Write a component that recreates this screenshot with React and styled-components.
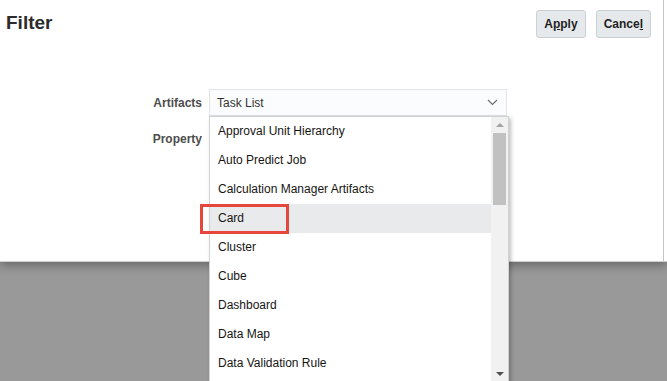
import React from 'react';
import styled, { createGlobalStyle } from 'styled-components';

const Global = createGlobalStyle`
  html, body {
    margin: 0;
    padding: 0;
    height: 381px;
    overflow: hidden;
    background: #999999;
    font-family: "Liberation Sans", Arial, sans-serif;
  }
`;

const Dialog = styled.div`
  background: #ffffff;
  height: 262px;
  box-shadow: 0 3px 10px rgba(0, 0, 0, 0.35);
  border-bottom: 1px solid #cfcfcf;
  box-sizing: border-box;
`;

const Panel = styled.div`
  width: 664px;
  height: 100%;
  border-right: 1px solid #c6c6c6;
  box-sizing: border-box;
`;

const Header = styled.div`
  display: flex;
  justify-content: space-between;
  align-items: flex-start;
  padding: 10px 12px 0 6px;
`;

const Title = styled.h1`
  margin: 2px 0 0;
  font-size: 19px;
  line-height: 22px;
  font-weight: bold;
  color: #2b2b2b;
`;

const Actions = styled.div`
  display: flex;
  gap: 10px;
`;

const Button = styled.button`
  height: 28px;
  padding: 0 7px;
  border: 1px solid #c9d1d6;
  border-radius: 3px;
  background: #e5e9ec;
  font-family: inherit;
  font-size: 12px;
  font-weight: bold;
  color: #1f1f1f;
  u {
    text-underline-offset: 1px;
  }
`;

const Form = styled.div`
  display: grid;
  grid-template-columns: 202px 298px;
  grid-auto-rows: 27px;
  column-gap: 7px;
  row-gap: 9px;
  margin-top: 51px;
`;

const Label = styled.label`
  align-self: center;
  text-align: right;
  font-size: 12px;
  font-weight: bold;
  color: #4d4d4d;
`;

const Field = styled.div`
  position: relative;
`;

const Select = styled.div`
  display: flex;
  align-items: center;
  justify-content: space-between;
  height: 27px;
  box-sizing: border-box;
  padding: 0 8px 0 7px;
  border: 1px solid #dfe4e8;
  background: #fbfcfd;
  font-size: 12px;
  color: #333333;
`;

const List = styled.div`
  position: absolute;
  top: 27px;
  left: 0;
  width: 300px;
  height: 266px;
  display: flex;
  background: #ffffff;
  border: 1px solid #d2d2d2;
  box-sizing: border-box;
  box-shadow: 2px 2px 4px rgba(0, 0, 0, 0.25);
  z-index: 2;
`;

const Items = styled.ul`
  flex: 1;
  list-style: none;
  margin: 0;
  padding: 0;
`;

const Item = styled.li`
  position: relative;
  height: 29px;
  line-height: 29px;
  padding-left: 8px;
  font-size: 12px;
  color: #161513;
  background: ${(p) => (p.$active ? '#e9eaeb' : 'transparent')};
`;

const Marker = styled.span`
  position: absolute;
  left: -10px;
  top: 0;
  width: 89px;
  height: 30px;
  border: 3px solid #e5473d;
  box-sizing: border-box;
`;

const Scrollbar = styled.div`
  width: 17px;
  display: flex;
  flex-direction: column;
  align-items: center;
  background: #f1f1f1;
`;

const Arrow = styled.span`
  width: 0;
  height: 0;
  border-left: 4px solid transparent;
  border-right: 4px solid transparent;
  ${(p) =>
    p.$down
      ? 'border-top: 4px solid #505050; margin-top: auto; margin-bottom: 5px;'
      : 'border-bottom: 4px solid #a3a3a3; margin-top: 6px;'}
`;

const Thumb = styled.div`
  width: 13px;
  height: 72px;
  margin-top: 6px;
  background: #c1c1c1;
`;

const items = [
  'Approval Unit Hierarchy',
  'Auto Predict Job',
  'Calculation Manager Artifacts',
  'Card',
  'Cluster',
  'Cube',
  'Dashboard',
  'Data Map',
  'Data Validation Rule',
];

const Chevron = () => (
  <svg width="11" height="7" viewBox="0 0 11 7">
    <path d="M1 1l4.5 4.5L10 1" fill="none" stroke="#6b6b6b" strokeWidth="1.1" />
  </svg>
);

const App = () => {
  return (
    <>
      <Global />
      <Dialog>
        <Panel>
          <Header>
            <Title>Filter</Title>
            <Actions>
              <Button>A<u>p</u>ply</Button>
              <Button>Cance<u>l</u></Button>
            </Actions>
          </Header>
          <Form>
            <Label>Artifacts</Label>
            <Field>
              <Select>
                Task List
                <Chevron />
              </Select>
              <List>
                <Items>
                  {items.map((name) => (
                    <Item key={name} $active={name === 'Card'}>
                      {name}
                      {name === 'Card' && <Marker />}
                    </Item>
                  ))}
                </Items>
                <Scrollbar>
                  <Arrow />
                  <Thumb />
                  <Arrow $down />
                </Scrollbar>
              </List>
            </Field>
            <Label>Property</Label>
            <Field>
              <Select />
            </Field>
          </Form>
        </Panel>
      </Dialog>
    </>
  );
};

export default App;
